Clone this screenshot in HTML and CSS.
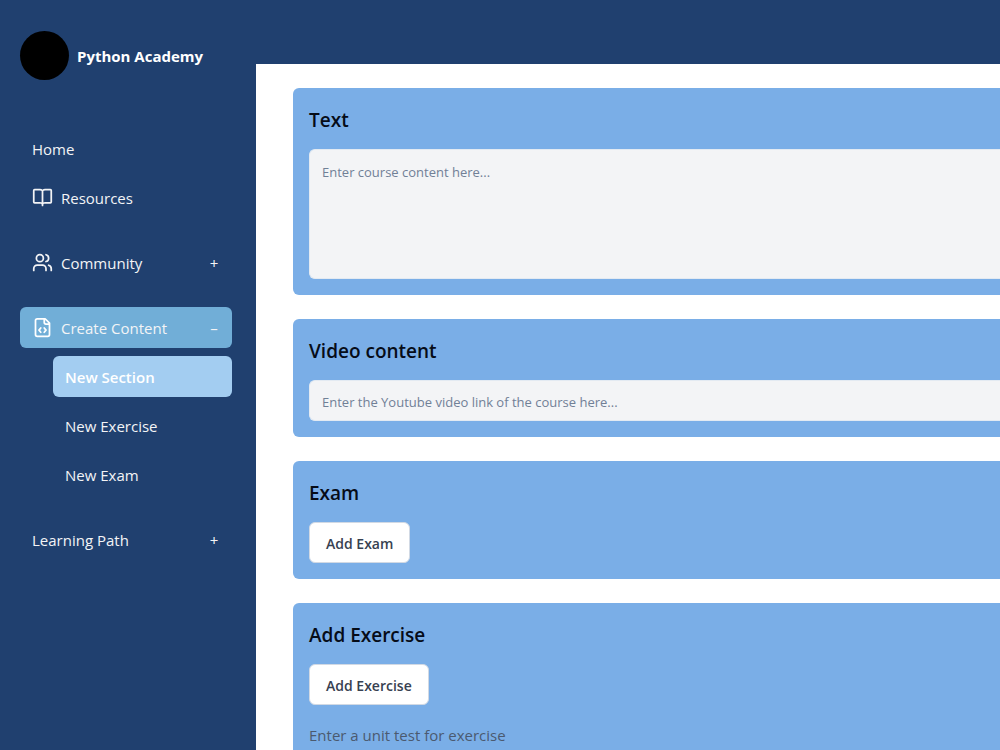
FILE: index.html
```html
<!DOCTYPE html>
<html lang="en">
<head>
<meta charset="utf-8">
<meta name="viewport" content="width=device-width, initial-scale=1">
<title>Python Academy</title>
<link rel="stylesheet" href="styles.css">
</head>
<body>
<div class="app">
  <aside class="sidebar">
    <a class="brand" href="#"><span class="brand-logo"></span><span class="brand-name">Python Academy</span></a>
    <nav class="nav">
      <div class="nav-group">
        <a class="nav-item" href="#">Home</a>
        <a class="nav-item" href="#">
          <svg class="icon" viewBox="0 0 24 24" aria-hidden="true"><path d="M12 5v16M12 5a4 2 0 0 0-3-2H3a1 1 0 0 0-1 1v13a1 1 0 0 0 1 1h6a4 2 0 0 1 3 1.500 4 2 0 0 1 3-1.500h6a1 1 0 0 0 1-1V4a1 1 0 0 0-1-1h-6a4 2 0 0 0-3 2"/></svg>
          <span>Resources</span>
        </a>
      </div>
      <div class="nav-group">
        <button class="nav-item" type="button">
          <svg class="icon" viewBox="0 0 24 24" aria-hidden="true"><path d="M16 21v-2a4 4 0 0 0-4-4H6a4 4 0 0 0-4 4v2M22 21v-2a4 4 0 0 0-3-3.870M16 3.130a4 4 0 0 1 0 7.750"/><circle cx="9" cy="7" r="4"/></svg>
          <span>Community</span><span class="toggle">+</span>
        </button>
      </div>
      <div class="nav-group">
        <button class="nav-item open" type="button" aria-expanded="true">
          <svg class="icon icon-bold" viewBox="0 0 24 24" aria-hidden="true"><path d="M15 2H6a2 2 0 0 0-2 2v16a2 2 0 0 0 2 2h12a2 2 0 0 0 2-2V7zM14 2v4a2 2 0 0 0 2 2h4M10 12.500 8 15l2 2.500M14 12.500l2 2.500-2 2.500"/></svg>
          <span>Create Content</span><span class="toggle">–</span>
        </button>
        <div class="subnav">
          <a class="nav-item current" href="#" aria-current="page">New Section</a>
          <a class="nav-item" href="#">New Exercise</a>
          <a class="nav-item" href="#">New Exam</a>
        </div>
      </div>
      <div class="nav-group">
        <button class="nav-item" type="button"><span>Learning Path</span><span class="toggle">+</span></button>
      </div>
    </nav>
  </aside>
  <main class="content">
    <section class="card">
      <h2><label for="course-text">Text</label></h2>
      <textarea class="field field-area" id="course-text" placeholder="Enter course content here..."></textarea>
    </section>
    <section class="card">
      <h2><label for="video-link">Video content</label></h2>
      <input class="field" id="video-link" type="text" placeholder="Enter the Youtube video link of the course here...">
    </section>
    <section class="card">
      <h2>Exam</h2>
      <button class="button" type="button">Add Exam</button>
    </section>
    <section class="card">
      <h2>Add Exercise</h2>
      <button class="button" type="button">Add Exercise</button>
      <p class="hint">Enter a unit test for exercise</p>
    </section>
  </main>
</div>
</body>
</html>
```
FILE: styles.css
```css
* { box-sizing: border-box; }

body {
  margin: 0;
  font-family: "Segoe UI", "Open Sans", "Noto Sans", sans-serif;
  font-size: 15px;
  line-height: 24px;
}

button, input, textarea { font: inherit; }

.app {
  display: flex;
  height: 100vh;
  overflow: hidden;
  background: #20406f;
}

.sidebar {
  flex: 0 0 256px;
  padding: 31px 24px 24px 20px;
  color: #f3f4f6;
}

.brand {
  display: flex;
  align-items: center;
  gap: 8px;
  margin-bottom: 48px;
  color: #fff;
  font-weight: 700;
  text-decoration: none;
}

.brand-logo {
  width: 49px;
  height: 49px;
  border-radius: 50%;
  background: #000;
}

.nav { display: grid; gap: 24px; }
.nav-group, .subnav { display: grid; gap: 8px; }
.subnav { padding-left: 33px; }

.nav-item {
  display: flex;
  align-items: center;
  gap: 8px;
  width: 100%;
  height: 41px;
  padding: 0 12px;
  border: 0;
  border-radius: 6px;
  background: transparent;
  color: inherit;
  text-align: left;
  text-decoration: none;
}

.open { background: #71aed7; }
.current { background: #a3cdf1; color: #fff; font-weight: 600; }
.toggle { width: 12px; margin-left: auto; text-align: center; }

.icon {
  width: 21px;
  height: 21px;
  fill: none;
  stroke: currentColor;
  stroke-width: 2;
  stroke-linecap: round;
  stroke-linejoin: round;
}

.content {
  flex: 1;
  min-width: 0;
  display: flex;
  flex-direction: column;
  gap: 24px;
  margin-top: 64px;
  padding: 24px 0 24px 37px;
  overflow: hidden;
  background: #fff;
}

.card {
  flex: none;
  padding: 18px 0 16px 16px;
  border-radius: 6px 0 0 6px;
  background: #7aaee7;
}

.card h2 {
  margin: 0 0 14px;
  color: #060c18;
  font-size: 19px;
  font-weight: 600;
  line-height: 29px;
}

.field {
  display: block;
  width: 100%;
  height: 41px;
  padding: 2px 12px 0;
  border: 1px solid #e3eaf2;
  border-right: 0;
  border-radius: 6px 0 0 6px;
  background: #f3f4f6;
  font-size: 13px;
}

.field-area { height: 130px; padding: 10px 12px; resize: none; }
.field::placeholder { color: #718096; opacity: 1; }

.button {
  display: block;
  height: 41px;
  padding: 2px 16px 0;
  border: 1px solid #d1d9e4;
  border-radius: 6px;
  background: #fff;
  color: #374151;
  font-size: 14px;
  font-weight: 600;
}

.hint { margin: 16px 0 0; color: #4b5a70; line-height: 28px; }

.icon-bold { stroke: #fff; }
```
